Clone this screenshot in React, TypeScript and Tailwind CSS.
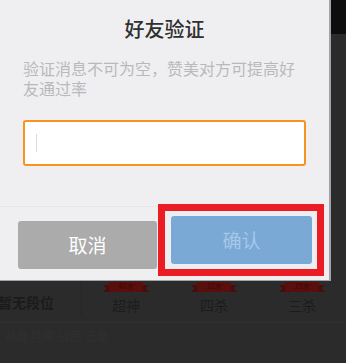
import React from "react";

const font = { fontFamily: '"Noto Sans CJK SC", "Noto Sans", sans-serif' };

function Ribbon({ label }: { label: string }) {
  return (
    <div className="relative flex h-[11px] w-[46px] items-center justify-center">
      <div className="absolute left-0 top-[4px] h-[7px] w-[9px] bg-[#4a0c0c] [clip-path:polygon(0_0,100%_0,100%_100%,0_100%,40%_50%)]" />
      <div className="absolute right-0 top-[4px] h-[7px] w-[9px] bg-[#4a0c0c] [clip-path:polygon(0_0,100%_0,60%_50%,100%_100%,0_100%)]" />
      <div className="relative flex h-[10px] w-[34px] items-center justify-center rounded-b-[3px] bg-[#5a0f0f] text-[7px] leading-none text-[#3a0505]">
        {label}
      </div>
    </div>
  );
}

export default function App() {
  return (
    <div className="relative h-[363px] w-[346px] overflow-hidden bg-[#2b2b2b]" style={font}>
      {/* background page */}
      <div className="flex h-full flex-col">
        <div className="h-[34px] bg-[#0d0d0d]" />
        <div className="h-[247px]" />
        <div className="flex h-[36px] items-stretch">
          <div className="flex w-[91px] items-center border-r border-[#262626]">
            <span className="-ml-[2px] pt-[6px] text-[14px] font-bold leading-none text-[#1b1b19]">暂无段位</span>
          </div>
          <div className="grid grid-cols-[88px_88px_88px]">
            {[
              ["40次", "超神"],
              ["32次", "四杀"],
              ["29次", "三杀"],
            ].map(([r, t]) => (
              <div key={t} className="flex flex-col items-center gap-[6px]">
                <Ribbon label={r} />
                <span className="text-[14px] leading-none text-[#1c1c1c]">{t}</span>
              </div>
            ))}
          </div>
        </div>
        <div className="mt-[5px] border-t border-[#303030]" />
        <div className="mt-[4px] flex gap-[14px] pl-[4px] text-[12px] text-[#303030]">
          <span>对局 胜率 战绩 记录</span>
        </div>
      </div>

      {/* dialog */}
      <div className="absolute left-0 top-0 flex h-[281px] w-[331px] flex-col border-b border-r-2 border-[#a3a3a5] bg-[#efeff1]">
        <div className="flex h-[58px] items-center justify-center">
          <span className="text-[20px] font-medium leading-none text-[#303030]">好友验证</span>
        </div>
        <p className="ml-[23px] mr-[22px] text-[16px] leading-[20px] text-[#b9b9bb]">
          验证消息不可为空，赞美对方可提高好友通过率
        </p>
        <div className="ml-[23px] mt-[22px] flex h-[46px] w-[283px] items-center rounded-[3px] border-2 border-[#f7931e] bg-white pl-[11px]">
          <div className="h-[18px] w-[1px] bg-[#d9d9d9]" />
        </div>
        <div className="mt-[40px] border-t border-[#e6e6e8]" />
        <div className="flex flex-1 items-start pt-[14px]">
          <button className="ml-[18px] flex h-[48px] w-[139px] items-center justify-center rounded-[3px] bg-[#ababab] text-[19px] text-white">
            取消
          </button>
          <div className="-mt-[17px] ml-[1px] border-[7px] border-[#ec1c24] p-[5px] pl-[6px]">
            <button className="flex h-[48px] w-[141px] items-center justify-center rounded-[3px] bg-[#7aa9d5] text-[19px] text-[#a6c8e8]">
              确认
            </button>
          </div>
        </div>
      </div>
    </div>
  );
}
